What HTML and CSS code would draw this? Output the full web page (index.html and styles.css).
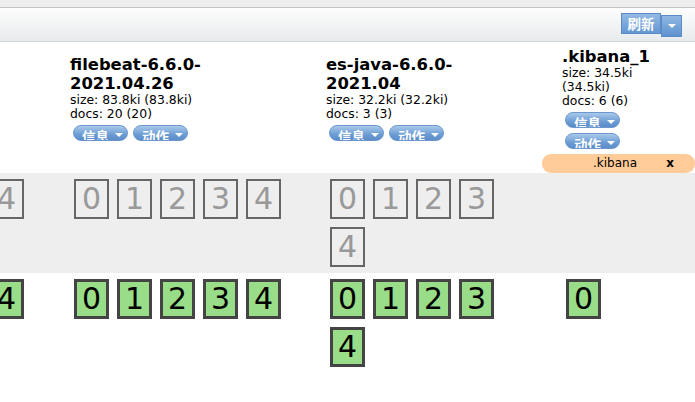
FILE: index.html
```html
<!DOCTYPE html>
<html lang="zh">
<head>
<meta charset="utf-8">
<title>Overview</title>
<link rel="stylesheet" href="styles.css">
</head>
<body>
<div class="topband"></div>
<div class="toolbar">
  <button class="btn-refresh">刷新</button>
  <button class="btn-drop"><span class="caret"></span></button>
</div>
<div class="viewport">
  <div class="table">
    <div class="row row-head">
      <div class="cell c1"></div>
      <div class="cell c2">
        <div class="title">filebeat-6.6.0-<wbr>2021.04.26</div>
        <div class="stat">size: 83.8ki (83.8ki)</div>
        <div class="stat">docs: 20 (20)</div>
        <div class="btns"><span class="pill"><span class="pill-text">信息</span><span class="caret"></span></span><span class="pill"><span class="pill-text">动作</span><span class="caret"></span></span></div>
      </div>
      <div class="cell c3">
        <div class="title">es-java-6.6.0-<wbr>2021.04</div>
        <div class="stat">size: 32.2ki (32.2ki)</div>
        <div class="stat">docs: 3 (3)</div>
        <div class="btns"><span class="pill"><span class="pill-text">信息</span><span class="caret"></span></span><span class="pill"><span class="pill-text">动作</span><span class="caret"></span></span></div>
      </div>
      <div class="cell c4">
        <div class="title">.kibana_1</div>
        <div class="stat">size: 34.5ki (34.5ki)</div>
        <div class="stat">docs: 6 (6)</div>
        <div class="btns"><span class="pill"><span class="pill-text">信息</span><span class="caret"></span></span><span class="pill"><span class="pill-text">动作</span><span class="caret"></span></span></div>
      </div>
    </div>
    <div class="row row-alias">
      <div class="cell c1"></div>
      <div class="cell c2"></div>
      <div class="cell c3"></div>
      <div class="cell c4"><div class="alias-bar"><span>.kibana</span><span class="alias-x">x</span></div></div>
    </div>
    <div class="row row-unassigned">
      <div class="cell c1 shards"><span class="shard un">0</span><span class="shard un">1</span><span class="shard un">2</span><span class="shard un">3</span><span class="shard un">4</span></div>
      <div class="cell c2 shards"><span class="shard un">0</span><span class="shard un">1</span><span class="shard un">2</span><span class="shard un">3</span><span class="shard un">4</span></div>
      <div class="cell c3 shards"><span class="shard un">0</span><span class="shard un">1</span><span class="shard un">2</span><span class="shard un">3</span><span class="shard un">4</span></div>
      <div class="cell c4 shards"></div>
    </div>
    <div class="row row-started">
      <div class="cell c1 shards"><span class="shard ok">0</span><span class="shard ok">1</span><span class="shard ok">2</span><span class="shard ok">3</span><span class="shard ok">4</span></div>
      <div class="cell c2 shards"><span class="shard ok">0</span><span class="shard ok">1</span><span class="shard ok">2</span><span class="shard ok">3</span><span class="shard ok">4</span></div>
      <div class="cell c3 shards"><span class="shard ok">0</span><span class="shard ok">1</span><span class="shard ok">2</span><span class="shard ok">3</span><span class="shard ok">4</span></div>
      <div class="cell c4 shards"><span class="shard ok">0</span></div>
    </div>
  </div>
</div>
</body>
</html>
```
FILE: styles.css
```css
html, body {
  margin: 0;
  padding: 0;
  background: #fff;
  overflow: hidden;
}
body {
  font-family: "DejaVu Sans", Verdana, "Noto Sans CJK SC", sans-serif;
  font-size: 12px;
  color: #000;
}

.topband {
  height: 7px;
  background: #eeeeee;
  border-bottom: 1px solid #c4c4c4;
}

.toolbar {
  box-sizing: border-box;
  height: 34px;
  padding: 5px 13px 0 0;
  background: linear-gradient(#fdfdfd, #e8ebed);
  border-bottom: 1px solid #d2d6d9;
  display: flex;
  justify-content: flex-end;
  align-items: flex-start;
}

.btn-refresh {
  box-sizing: border-box;
  width: 40px;
  height: 21px;
  margin: 0;
  padding: 0;
  border: 1px solid #5b8ac7;
  background: linear-gradient(#93b9e4, #6497d3);
  color: #fff;
  font-family: "Noto Sans CJK SC", sans-serif;
  font-weight: bold;
  font-size: 13.5px;
  line-height: 19px;
}

.btn-drop {
  box-sizing: border-box;
  width: 21px;
  height: 22px;
  margin: 2px 0 0 0;
  padding: 0;
  border: 1px solid #5b8ac7;
  background: linear-gradient(#8fb6e2, #5f93d0);
  display: flex;
  align-items: center;
  justify-content: center;
}

.caret {
  display: inline-block;
  width: 0;
  height: 0;
  border-left: 4px solid transparent;
  border-right: 4px solid transparent;
  border-top: 4px solid #fff;
}

.viewport {
  overflow: hidden;
}

.table {
  margin-left: -187px;
}

.row {
  display: grid;
  grid-template-columns: 257px 256px 236px 110px;
}

.cell {
  box-sizing: border-box;
}
.c1, .c2 { padding-right: 36px; }
.c3 { padding-right: 50px; }
.c4 { padding-right: 10px; }

.row-head {
  height: 111px;
  align-items: center;
}

.title {
  font-weight: bold;
  font-size: 16.4px;
  line-height: 19px;
}

.stat {
  font-size: 12.4px;
  line-height: 14px;
}

.btns {
  display: flex;
  flex-wrap: wrap;
  gap: 5px 5px;
  margin-top: 4px;
  padding-left: 3px;
}

.pill {
  box-sizing: border-box;
  display: flex;
  align-items: flex-start;
  width: 55px;
  height: 16px;
  padding: 3px 0 0 8px;
  overflow: hidden;
  border: 1px solid #6a98cf;
  border-radius: 8px;
  background: linear-gradient(#a9c9ea, #6d9dd4 60%, #5b8cc8);
  color: #fff;
}

.pill-text {
  font-family: "Noto Sans CJK SC", sans-serif;
  font-weight: bold;
  font-size: 13.5px;
  line-height: 14px;
}

.pill .caret {
  margin: 4px 0 0 6px;
}

.row-alias {
  height: 20px;
}

.alias-bar {
  box-sizing: border-box;
  width: 153px;
  height: 19px;
  margin: 1px 0 0 -20px;
  padding: 0 21px 0 51px;
  border-radius: 9px;
  background: #ffcc99;
  display: flex;
  justify-content: space-between;
  align-items: center;
  line-height: 19px;
}

.alias-x {
  font-weight: bold;
}

.row-unassigned {
  background: #eeeeee;
}

.shards {
  display: flex;
  flex-wrap: wrap;
  align-content: flex-start;
  padding-top: 2px;
  padding-bottom: 2px;
}

.shard {
  box-sizing: border-box;
  width: 35px;
  height: 40px;
  margin: 4px;
  text-align: center;
  font-size: 30px;
}

.shard.un {
  border: 2px solid #666;
  color: #999;
  line-height: 36px;
}

.shard.ok {
  border: 3px solid #444;
  background: #99dd88;
  color: #000;
  line-height: 34px;
}
```
